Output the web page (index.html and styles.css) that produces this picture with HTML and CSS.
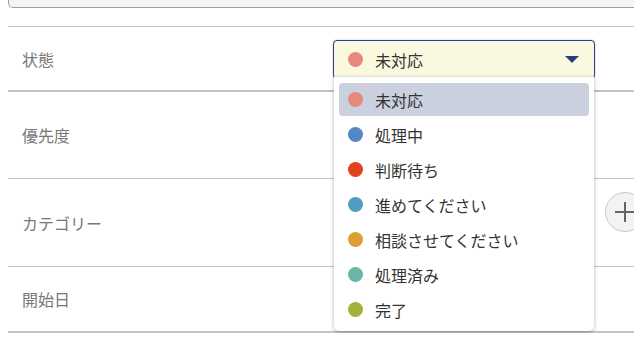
FILE: index.html
```html
<!DOCTYPE html>
<html lang="ja">
<head>
  <meta charset="UTF-8" />
  <meta name="viewport" content="width=device-width, initial-scale=1.0" />
  <title>課題の編集</title>
  <link rel="stylesheet" href="styles.css">
</head>
<body>
  <div class="top-box"></div>

  <div class="form">
    <div class="row row-first">
      <div class="label">状態</div>
      <div class="field">
        <div class="select">
          <span class="dot" style="background:#e8877b;"></span>
          <span class="select-text">未対応</span>
          <span class="caret"></span>
        </div>
        <ul class="menu">
          <li class="menu-item active"><span class="dot" style="background:#e8877b;"></span>未対応</li>
          <li class="menu-item"><span class="dot" style="background:#5487c6;"></span>処理中</li>
          <li class="menu-item"><span class="dot" style="background:#e2401e;"></span>判断待ち</li>
          <li class="menu-item"><span class="dot" style="background:#4f9ec0;"></span>進めてください</li>
          <li class="menu-item"><span class="dot" style="background:#dc9f33;"></span>相談させてください</li>
          <li class="menu-item"><span class="dot" style="background:#6bb5a7;"></span>処理済み</li>
          <li class="menu-item"><span class="dot" style="background:#a4b23c;"></span>完了</li>
        </ul>
      </div>
    </div>

    <div class="row row-second">
      <div class="label">優先度</div>
      <div class="field"></div>
    </div>

    <div class="row row-third">
      <div class="label">カテゴリー</div>
      <div class="field"></div>
      <button class="add-btn" aria-label="追加">
        <svg width="22" height="22" viewBox="0 0 22 22"><path d="M11 1v20M1 11h20" stroke="#666" stroke-width="2" fill="none"/></svg>
      </button>
    </div>

    <div class="row row-last">
      <div class="label">開始日</div>
      <div class="field"></div>
    </div>
  </div>
</body>
</html>
```

FILE: styles.css
```css
html, body { overflow: hidden; }
body {
  margin: 0;
  font-family: "Noto Sans CJK JP", "Noto Sans", sans-serif;
  font-size: 16px;
  color: #333;
  background: #ffffff;
}
.top-box {
  margin-left: 8px;
  height: 7px;
  background: #f4f4f4;
  border: 1px solid #a0a0a0;
  border-top: none;
  border-right: none;
  border-radius: 0 0 0 5px;
}
.form {
  margin: 18px 0 0 8px;
  border-top: 1px solid #c4c4c4;
}
.row {
  display: grid;
  grid-template-columns: 301px 262px 40px;
  column-gap: 10px;
  align-items: center;
  padding-left: 14px;
  border-bottom: 1px solid #c4c4c4;
}
.row-first { height: 63px; border-bottom-width: 2px; }
.row-second { height: 86px; }
.row-third { height: 87px; }
.row-last { height: 64px; border-bottom-width: 2px; }
.label { color: #777; line-height: 20px; }
.field { position: relative; }
.select {
  display: flex;
  align-items: center;
  height: 37px;
  margin-top: 2px;
  padding: 0 15px 0 14px;
  background: #fbf8e0;
  border: 1px solid #2b3c88;
  border-radius: 4px;
  box-shadow: 0 0 2px rgba(43, 60, 136, 0.35);
}
.select-text { flex: 1; margin-left: 12px; line-height: 20px; }
.caret {
  width: 0; height: 0;
  border-left: 7px solid transparent;
  border-right: 7px solid transparent;
  border-top: 7px solid #2b3c7a;
}
.dot {
  display: inline-block;
  width: 15px; height: 15px;
  border-radius: 50%;
  flex: none;
}
.menu {
  position: absolute;
  top: 39px; left: 1px; right: 1px;
  margin: 0;
  padding: 6px 5px 5px;
  list-style: none;
  background: #fff;
  border-radius: 0 0 5px 5px;
  box-shadow: 0 1px 4px rgba(0,0,0,0.3);
  display: flex;
  flex-direction: column;
  gap: 2px;
  z-index: 5;
}
.menu-item {
  display: flex;
  align-items: center;
  gap: 12px;
  height: 33px;
  padding-left: 9px;
  border-radius: 4px;
  line-height: 20px;
}
.menu-item.active { background: #cbd0de; }
.add-btn {
  align-self: start;
  margin-top: 13px;
  width: 40px; height: 40px;
  padding: 0;
  display: flex; align-items: center; justify-content: center;
  background: #f3f3f3;
  border: 1px solid #c8c8c8;
  border-radius: 50%;
}
```
